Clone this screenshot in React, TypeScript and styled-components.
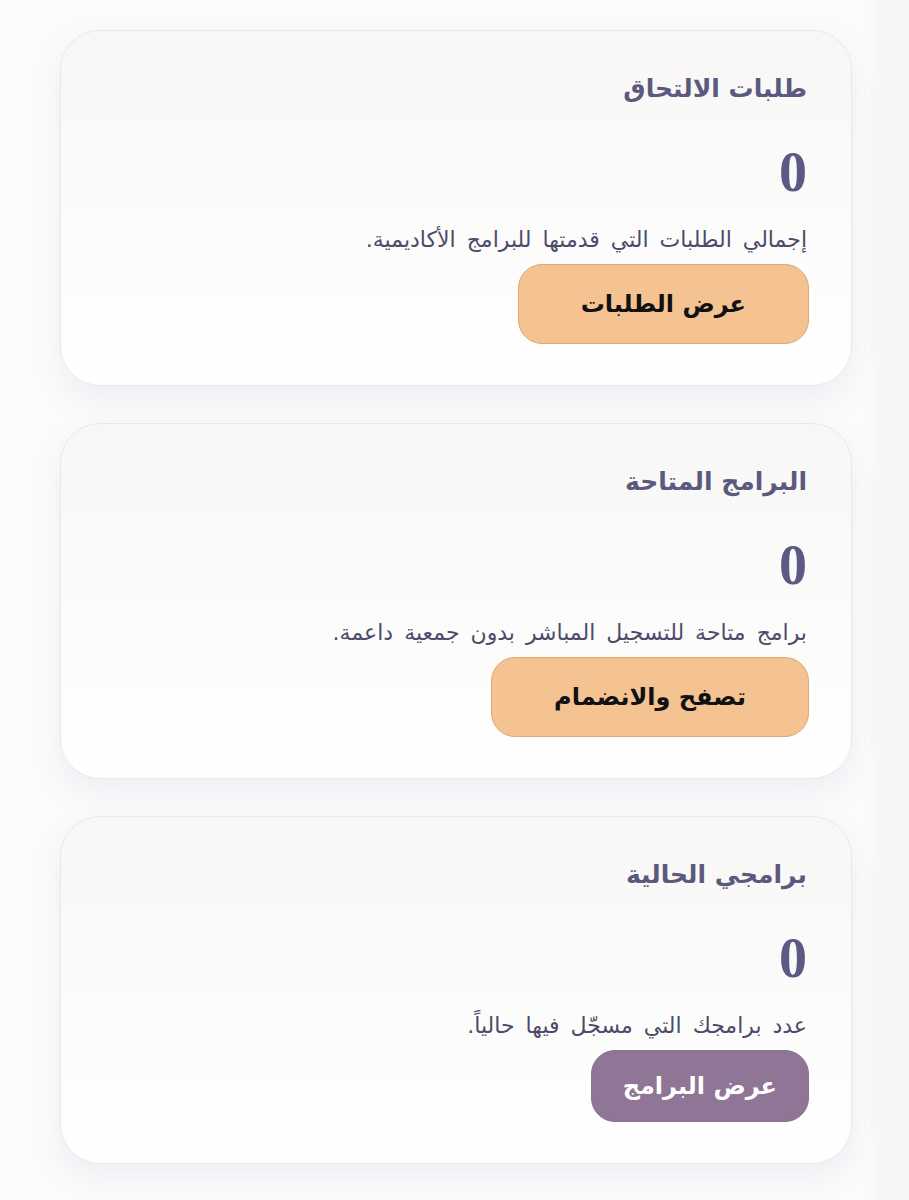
import styled, { createGlobalStyle } from 'styled-components';

const GlobalStyle = createGlobalStyle`
  html, body {
    margin: 0;
    padding: 0;
    background: linear-gradient(to right, #fbfbfc 0%, #fbfbfc 95.5%, #f5f5f8 97%, #f7f7f9 100%);
  }
  * {
    box-sizing: border-box;
  }
`;

type Stat = {
  title: string;
  value: number;
  text: string;
  action: string;
  variant: 'orange' | 'purple';
};

const stats: Stat[] = [
  {
    title: 'طلبات الالتحاق',
    value: 0,
    text: 'إجمالي الطلبات التي قدمتها للبرامج الأكاديمية.',
    action: 'عرض الطلبات',
    variant: 'orange',
  },
  {
    title: 'البرامج المتاحة',
    value: 0,
    text: 'برامج متاحة للتسجيل المباشر بدون جمعية داعمة.',
    action: 'تصفح والانضمام',
    variant: 'orange',
  },
  {
    title: 'برامجي الحالية',
    value: 0,
    text: 'عدد برامجك التي مسجّل فيها حالياً.',
    action: 'عرض البرامج',
    variant: 'purple',
  },
];

export default function App() {
  return (
    <>
      <GlobalStyle />
      <Page dir="rtl">
        {stats.map((s) => (
          <Card key={s.title}>
            <Title>{s.title}</Title>
            <Value>{s.value}</Value>
            <Text>{s.text}</Text>
            <ActionButton type="button" $variant={s.variant}>
              {s.action}
            </ActionButton>
          </Card>
        ))}
      </Page>
    </>
  );
}

const Page = styled.main`
  display: flex;
  flex-direction: column;
  gap: 37px;
  padding: 30px 57px 36px 60px;
  font-family: 'DejaVu Sans', 'Noto Sans', sans-serif;
`;

const Card = styled.section`
  display: flex;
  flex-direction: column;
  align-items: flex-start;
  padding: 42px 42px 41px 42px;
  border-radius: 40px;
  border: 1px solid #e9e7ee;
  background: linear-gradient(to bottom, #f8f7f6 0%, #ffffff 100%);
  box-shadow: 0 12px 30px rgba(110, 110, 150, 0.09);
`;

const Title = styled.h2`
  margin: 0 0 0 0;
  padding-right: 2px;
  font-size: 25px;
  font-weight: 700;
  line-height: 32px;
  color: #5b5a7e;
`;

const Value = styled.div`
  margin-top: 39px;
  padding-right: 2px;
  font-family: 'Liberation Serif', 'Times New Roman', serif;
  font-size: 56px;
  font-weight: 700;
  line-height: 56px;
  color: #5b5a85;
`;

const Text = styled.p`
  margin: 26px 0 0;
  padding-right: 2px;
  font-size: 22px;
  line-height: 28px;
  word-spacing: 4px;
  color: #4d4b69;
`;

const ActionButton = styled.button<{ $variant: 'orange' | 'purple' }>`
  margin-top: 10px;
  font-family: 'DejaVu Sans', 'Noto Sans', sans-serif;
  font-size: 24px;
  font-weight: 700;
  height: ${(p) => (p.$variant === 'orange' ? '80px' : '72px')};
  padding: ${(p) => (p.$variant === 'orange' ? '0 62px' : '0 31px')};
  border-radius: 24px;
  border: 1px solid ${(p) => (p.$variant === 'orange' ? '#dcaa72' : '#8a7092')};
  background: ${(p) => (p.$variant === 'orange' ? '#f4c391' : '#8f7596')};
  color: ${(p) => (p.$variant === 'orange' ? '#111111' : '#ffffff')};
  cursor: pointer;
`;
